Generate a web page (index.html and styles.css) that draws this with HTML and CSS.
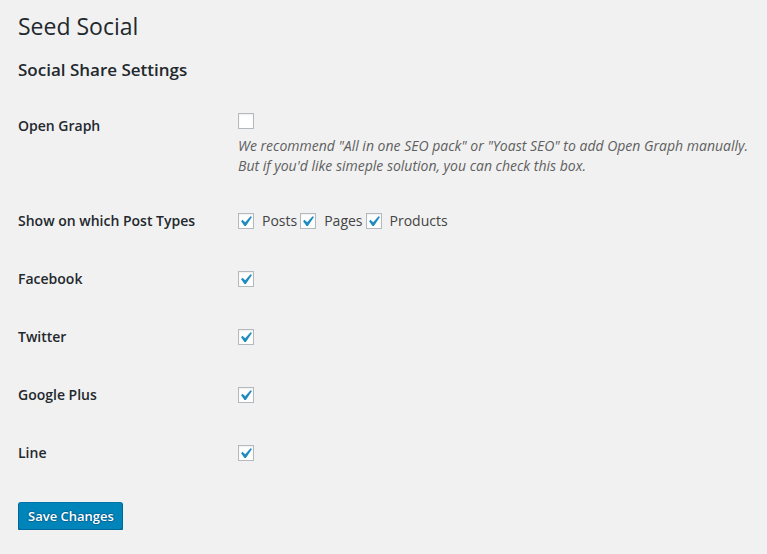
FILE: index.html
```html
<!DOCTYPE html>
<html>
<head>
<meta charset="utf-8">
<title>Seed Social</title>
<link rel="stylesheet" href="styles.css">
</head>
<body>
<div class="wrap">
  <h1 class="page-title">Seed Social</h1>
  <h2 class="section-title">Social Share Settings</h2>
  <div class="form-table">
    <div class="row row-og">
      <div class="th">Open Graph</div>
      <div class="td td-og">
        <span class="cb"></span>
        <p class="description">We recommend "All in one SEO pack" or "Yoast SEO" to add Open Graph manually.<br>But if you'd like simeple solution, you can check this box.</p>
      </div>
    </div>
    <div class="row">
      <div class="th">Show on which Post Types</div>
      <div class="td">
        <span class="cb checked"><svg viewBox="0 0 20 20"><path d="M14.83 4.89l1.34.94-5.81 8.38H9.02L5.78 9.67l1.34-1.25 2.57 2.4z"/></svg></span><span class="lbl">Posts</span>
        <span class="cb checked"><svg viewBox="0 0 20 20"><path d="M14.83 4.89l1.34.94-5.81 8.38H9.02L5.78 9.67l1.34-1.25 2.57 2.4z"/></svg></span><span class="lbl">Pages</span>
        <span class="cb checked"><svg viewBox="0 0 20 20"><path d="M14.83 4.89l1.34.94-5.81 8.38H9.02L5.78 9.67l1.34-1.25 2.57 2.4z"/></svg></span><span class="lbl">Products</span>
      </div>
    </div>
    <div class="row">
      <div class="th">Facebook</div>
      <div class="td"><span class="cb checked"><svg viewBox="0 0 20 20"><path d="M14.83 4.89l1.34.94-5.81 8.38H9.02L5.78 9.67l1.34-1.25 2.57 2.4z"/></svg></span></div>
    </div>
    <div class="row">
      <div class="th">Twitter</div>
      <div class="td"><span class="cb checked"><svg viewBox="0 0 20 20"><path d="M14.83 4.89l1.34.94-5.81 8.38H9.02L5.78 9.67l1.34-1.25 2.57 2.4z"/></svg></span></div>
    </div>
    <div class="row">
      <div class="th">Google Plus</div>
      <div class="td"><span class="cb checked"><svg viewBox="0 0 20 20"><path d="M14.83 4.89l1.34.94-5.81 8.38H9.02L5.78 9.67l1.34-1.25 2.57 2.4z"/></svg></span></div>
    </div>
    <div class="row">
      <div class="th">Line</div>
      <div class="td"><span class="cb checked"><svg viewBox="0 0 20 20"><path d="M14.83 4.89l1.34.94-5.81 8.38H9.02L5.78 9.67l1.34-1.25 2.57 2.4z"/></svg></span></div>
    </div>
  </div>
  <div class="submit"><button class="button-primary">Save Changes</button></div>
</div>
</body>
</html>
```
FILE: styles.css
```css
html, body {
  margin: 0;
  background: #f1f1f1;
}
body {
  font-family: "Open Sans", sans-serif;
  font-size: 13px;
  color: #444;
}
.wrap {
  padding: 0 10px 0 18px;
}
.page-title {
  margin: 0;
  padding: 12px 0 0;
  font-size: 23px;
  line-height: 29px;
  font-weight: 400;
  color: #23282d;
}
.section-title {
  margin: 0;
  padding-top: 17px;
  font-size: 17px;
  line-height: 23px;
  font-weight: 600;
  color: #23282d;
}
.form-table {
  margin-top: 16px;
  display: flex;
  flex-direction: column;
}
.row {
  display: flex;
  align-items: flex-start;
}
.th {
  width: 220px;
  flex: none;
  padding: 20px 0;
  font-size: 14px;
  line-height: 18px;
  font-weight: 600;
  color: #23282d;
}
.td {
  padding: 20px 0;
  height: 18px;
  display: flex;
  align-items: center;
  font-size: 14px;
  line-height: 18px;
}
.td-og {
  padding: 16px 0 16px;
  height: auto;
  display: block;
}
.td-og .cb {
  display: block;
}
.cb {
  position: relative;
  box-sizing: border-box;
  width: 16px;
  height: 16px;
  flex: none;
  border: 1px solid #b4b9be;
  background: #fff;
  box-shadow: inset 0 1px 2px rgba(0, 0, 0, 0.07);
}
.cb svg {
  position: absolute;
  left: -4px;
  top: -3px;
  width: 21px;
  height: 21px;
  fill: #1e8cbe;
}
.lbl {
  margin: 0 3px 0 8px;
  color: #444;
}
.description {
  margin: 7px 0 0;
  font-size: 14px;
  line-height: 20px;
  font-style: italic;
  color: #5f5f5f;
  white-space: nowrap;
}
.submit {
  padding-top: 20px;
}
.button-primary {
  box-sizing: border-box;
  height: 28px;
  padding: 0 8px 1px 9px;
  font-family: "Open Sans", sans-serif;
  font-size: 13px;
  line-height: 26px;
  font-weight: 600;
  color: #fff;
  background: #0085ba;
  border: 1px solid;
  border-color: #0073aa #006799 #006799;
  border-radius: 3px;
  box-shadow: 0 1px 0 #006799;
  text-shadow: 0 -1px 1px #006799, 1px 0 1px #006799, 0 1px 1px #006799, -1px 0 1px #006799;
  cursor: pointer;
}
```
